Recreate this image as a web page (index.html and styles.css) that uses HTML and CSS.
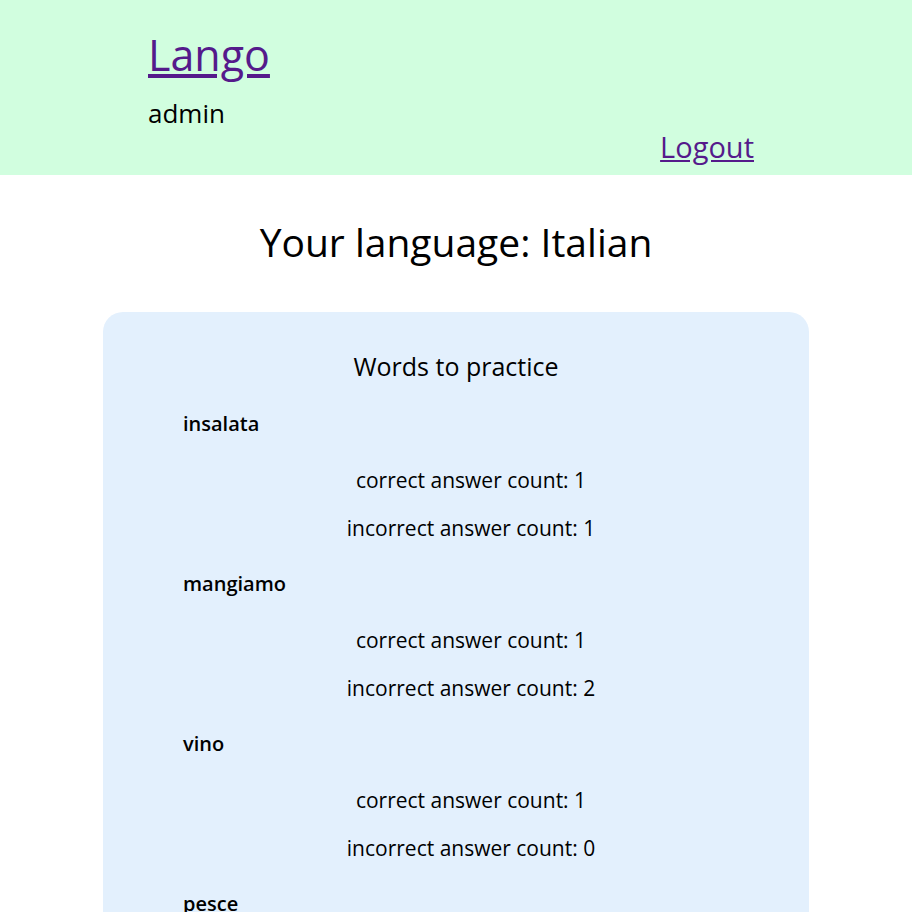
FILE: index.html
```html
<!DOCTYPE html>
<html>
<head>
<meta charset="utf-8">
<link rel="stylesheet" href="styles.css">
</head>
<body>
<header class="top">
  <div class="brand">
    <a class="logo" href="#">Lango</a>
    <div class="user">admin</div>
  </div>
  <div class="logout-row"><a class="logout" href="#">Logout</a></div>
</header>
<main class="main">
  <h1 class="title">Your language: Italian</h1>
  <section class="card">
    <h2 class="card-title">Words to practice</h2>
    <div class="word">
      <div class="word-name">insalata</div>
      <div class="count">correct answer count: 1</div>
      <div class="count">incorrect answer count: 1</div>
    </div>
    <div class="word">
      <div class="word-name">mangiamo</div>
      <div class="count">correct answer count: 1</div>
      <div class="count">incorrect answer count: 2</div>
    </div>
    <div class="word">
      <div class="word-name">vino</div>
      <div class="count">correct answer count: 1</div>
      <div class="count">incorrect answer count: 0</div>
    </div>
    <div class="word">
      <div class="word-name">pesce</div>
      <div class="count">correct answer count: 1</div>
      <div class="count">incorrect answer count: 0</div>
    </div>
  </section>
</main>
</body>
</html>
```

FILE: styles.css
```css
* { box-sizing: border-box; }
html, body { margin: 0; padding: 0; }
body {
  font-family: "Open Sans", "Noto Sans", sans-serif;
  color: #000;
  background: #fff;
}
a { color: #551a8b; }
.top {
  background: #d1fedf;
  height: 175px;
  padding: 26px 158px 0 148px;
  display: flex;
  flex-direction: column;
}
.brand { display: flex; flex-direction: column; }
.logo {
  font-size: 43px;
  line-height: 58px;
  align-self: flex-start;
}
.user {
  font-size: 26px;
  line-height: 36px;
  margin-top: 11px;
  font-weight: 500;
}
.logout-row { display: flex; justify-content: flex-end; margin-top: -4px; }
.logout { font-size: 29px; line-height: 40px; }
.title {
  margin: 0;
  padding-top: 41px;
  text-align: center;
  font-size: 39px;
  font-weight: 400;
  line-height: 52px;
}
.card {
  width: 706px;
  margin: 44px auto 0;
  background: #e3f0fd;
  border-radius: 20px;
  padding: 36px 50px 20px 80px;
}
.card-title {
  margin: 0 0 0 -30px;
  text-align: center;
  font-size: 25px;
  font-weight: 500;
  line-height: 36px;
}
.word { display: flex; flex-direction: column; }
.word-name {
  font-size: 20px;
  font-weight: 600;
  line-height: 28px;
  margin-top: 28px;
}
.word:first-of-type .word-name { margin-top: 26px; }
.count {
  text-align: center;
  font-size: 21px;
  line-height: 28px;
  margin-top: 20px;
}
.word .word-name + .count { margin-top: 28px; }
```
